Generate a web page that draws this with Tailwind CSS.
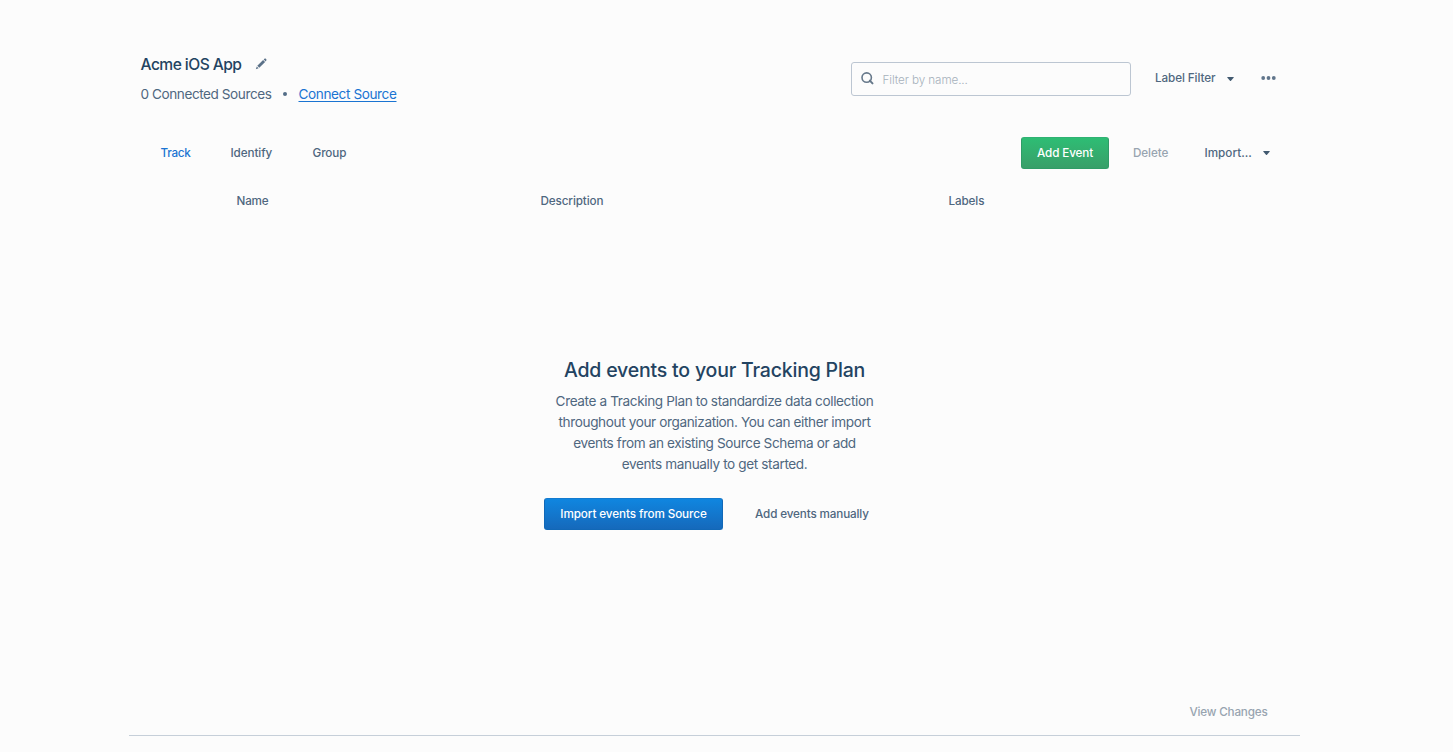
<!DOCTYPE html>
<html lang="en">
<head>
<meta charset="utf-8">
<title>Acme iOS App</title>
<script src="https://cdn.jsdelivr.net/npm/@tailwindcss/browser@4"></script>
</head>
<body class="h-[752px] overflow-hidden bg-[#fcfcfc] font-[Inter,'Liberation_Sans',sans-serif] text-[11.7px] leading-4 tracking-[-0.1px] font-medium text-[#4f677f]">
<main class="ml-[129px] flex h-[736px] w-[1171px] flex-col border-b border-[#c6cfd9]">
  <header class="flex h-[112px] shrink-0 items-start justify-between pl-[11.5px]">
    <div class="pt-[55px]">
      <div class="flex h-5 items-center">
        <h1 class="w-[101px] whitespace-nowrap text-[15.6px] tracking-[-0.55px] text-[#234361]">Acme iOS App</h1>
        <svg class="ml-[13.5px] mb-[3px] size-3" viewBox="0 0 12 12" fill="#5b7188"><path d="M8.1 2.1 10.1 4.1 4.3 9.7 2.3 7.7zM8.7 1.5 9.7.6Q10.2.2 10.6.6L11.4 1.4Q11.8 1.8 11.4 2.3L10.7 3.5zM1.8 8.4 3.6 10.2.8 11.2z"/></svg>
      </div>
      <div class="mt-[9px] flex h-5 items-center whitespace-nowrap text-[13.6px] font-normal">
        <span class="w-[131px] tracking-[-0.44px]">0 Connected Sources</span>
        <span class="ml-[11px] size-1 rounded-full bg-[#536d87]"></span>
        <a class="ml-3 tracking-[-0.4px] text-[#1a74d2] underline decoration-1 underline-offset-2">Connect Source</a>
      </div>
    </div>
    <div class="mt-[62px] flex h-[34px] items-center self-start">
      <label class="flex h-[34px] w-[280px] items-center rounded-[3px] border border-[#bcc6d2] pl-[9px]">
        <svg class="mb-[2px] size-[13px]" viewBox="0 0 13 13" fill="none" stroke="#66788a" stroke-width="1.6"><circle cx="5.7" cy="5.6" r="4.7"/><path d="m8.8 8.6 2.7 2.8" stroke-width="2" stroke-linecap="round"/></svg>
        <span class="ml-[9px] mt-px font-light tracking-[-0.1px] text-[#a6b1bb]">Filter by name...</span>
      </label>
      <button class="ml-[24.5px] flex w-[78.5px] items-center justify-between whitespace-nowrap pb-[2px]">Label Filter
        <svg class="mt-px h-1 w-[7px]" viewBox="0 0 7 4" fill="#425a70"><path d="M.7 0h5.6q.8 0 .3.7L4 3.7q-.5.5-1 0L.4.7Q-.1 0 .7 0z"/></svg>
      </button>
      <svg class="mb-[2px] ml-[27.5px] mr-[24px] h-4 w-[15px]" viewBox="0 0 15 16" fill="#60758b"><circle cx="2.2" cy="8" r="1.9"/><circle cx="7.5" cy="8" r="1.9"/><circle cx="12.8" cy="8" r="1.9"/></svg>
    </div>
  </header>
  <div class="mt-[25px] flex h-8 shrink-0 items-center justify-between pl-[31.5px] pr-[30px]">
    <nav class="flex gap-10">
      <a class="w-[30px] tracking-[-0.28px] text-[#1a74d2]">Track</a>
      <a class="w-[42px]">Identify</a>
      <a class="w-[34px]">Group</a>
    </nav>
    <div class="flex items-center">
      <button class="h-8 w-[88px] rounded-[3px] border border-[#2f9c67] border-t-[#2fb273] bg-linear-to-b from-[#2dbd74] to-[#389f69] tracking-[-0.13px] text-white">Add Event</button>
      <span class="ml-6 w-[36px] text-[#98a4b0]">Delete</span>
      <button class="ml-[35.5px] flex w-[65.5px] items-center justify-between"><span class="tracking-[0.02px]">Import...</span>
        <svg class="h-1 w-[7px]" viewBox="0 0 7 4" fill="#425a70"><path d="M.7 0h5.6q.8 0 .3.7L4 3.7q-.5.5-1 0L.4.7Q-.1 0 .7 0z"/></svg>
      </button>
    </div>
  </div>
  <div class="mt-6 grid h-4 shrink-0 grid-cols-[304px_408px_1fr] pl-[107.5px] tracking-[-0.12px]">
    <span class="tracking-[-0.2px]">Name</span><span>Description</span><span>Labels</span>
  </div>
  <section class="flex flex-1 flex-col items-center pt-[149px]">
    <h2 class="text-[19.5px] leading-6 tracking-[-0.19px] text-[#234361]">Add events to your Tracking Plan</h2>
    <p class="mt-[9px] text-center text-[13.6px] font-normal leading-[21px] tracking-[-0.385px]">Create a Tracking Plan to standardize data collection<br>throughout your organization. You can either import<br>events from an existing Source Schema or add<br>events manually to get started.</p>
    <div class="mt-[23px] flex w-[341px] items-center gap-8">
      <button class="h-8 w-[179px] rounded-[3px] border border-[#1168b7] border-t-[#127bd0] bg-linear-to-b from-[#0f86e0] to-[#1569bb] text-white">Import events from Source</button>
      <button class="whitespace-nowrap tracking-[-0.14px]">Add events manually</button>
    </div>
  </section>
  <footer class="flex h-[31px] shrink-0 justify-end pr-[32.5px] text-[#98a4b0]"><span class="tracking-[-0.2px]">View Changes</span></footer>
</main>
</body>
</html>
